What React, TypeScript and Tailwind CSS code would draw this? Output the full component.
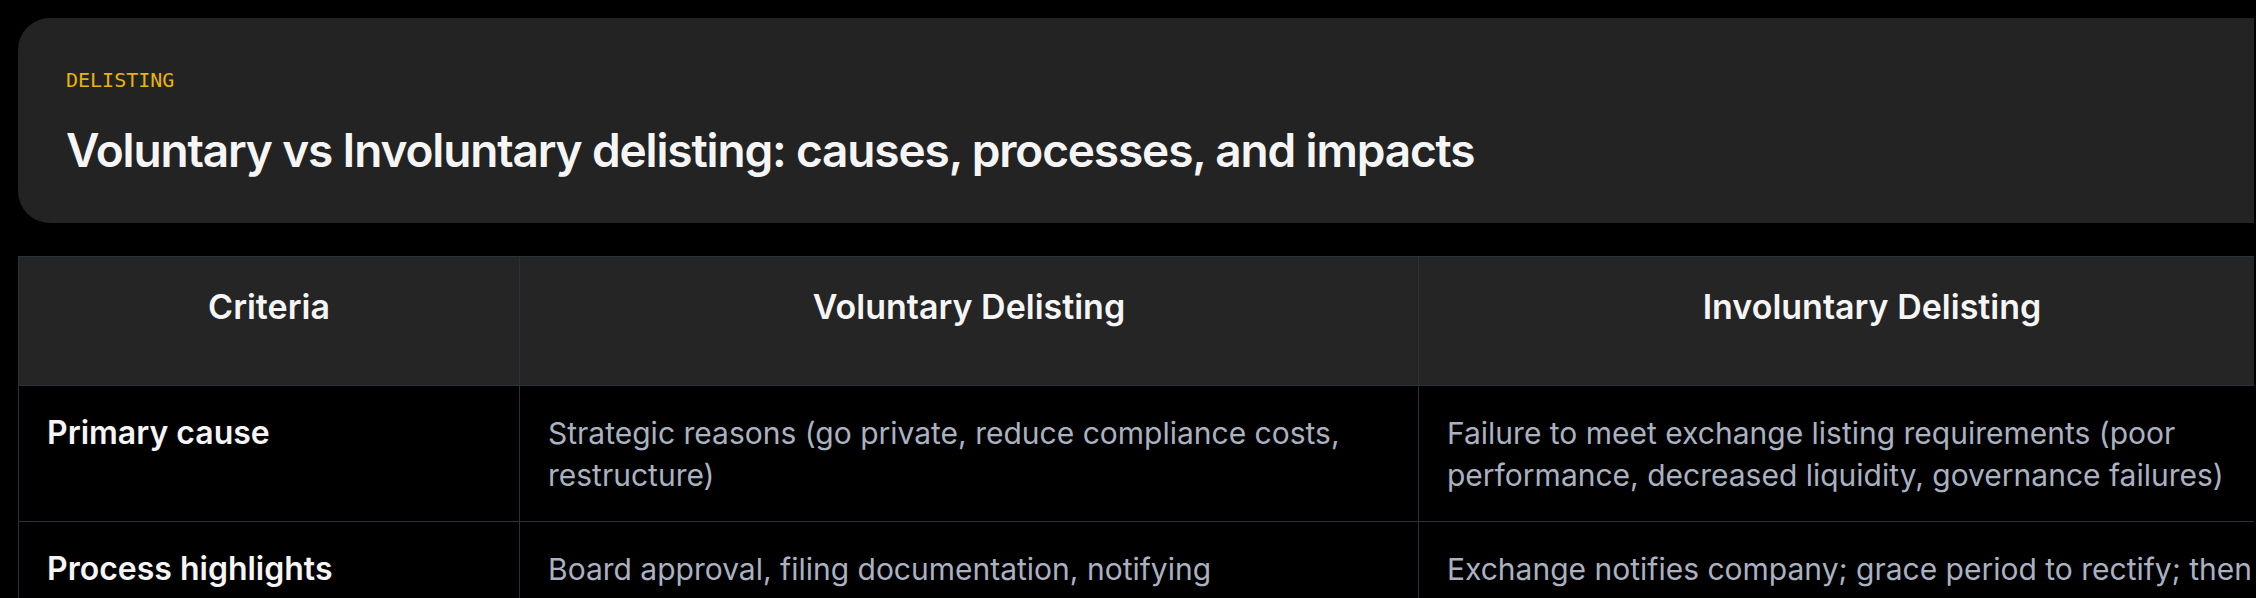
import React from 'react'

const rows = [
  {
    label: 'Primary cause',
    voluntary: 'Strategic reasons (go private, reduce compliance costs, restructure)',
    involuntary:
      'Failure to meet exchange listing requirements (poor performance, decreased liquidity, governance failures)',
  },
  {
    label: 'Process highlights',
    voluntary: 'Board approval, filing documentation, notifying shareholders and regulators',
    involuntary:
      'Exchange notifies company; grace period to rectify; then suspension and removal from the exchange',
  },
]

export default function App() {
  return (
    <div className="min-h-screen bg-black overflow-hidden font-['Inter',sans-serif]">
      <div className="ml-[18px] w-[2236px] overflow-hidden pt-[18px]">
        {/* Title card */}
        <section className="w-[2400px] rounded-[32px] bg-[#232323] px-[48px] pt-[48px] pb-[45px]">
          <p className="font-['DejaVu_Sans_Mono',monospace] text-[20px] leading-[28px] text-[#eab308]">
            DELISTING
          </p>
          <h1 className="mt-[29px] text-[46px] leading-[1.2] font-semibold tracking-tight text-[#f5f5f5]">
            Voluntary vs Involuntary delisting: causes, processes, and impacts
          </h1>
        </section>

        {/* Comparison table */}
        <div className="mt-[33px] w-[2308px] border border-[#2b3138]">
          <div className="grid grid-cols-[500px_899px_907px] bg-[#252525] border-b border-[#2b3138]">
            {['Criteria', 'Voluntary Delisting', 'Involuntary Delisting'].map((h, i) => (
              <div
                key={h}
                className={
                  'h-[128px] px-[28px] pt-[26px] text-center text-[34px] leading-[48px] font-semibold text-[#f5f5f5]' +
                  (i > 0 ? ' border-l border-[#2b3138]' : '')
                }
              >
                {h}
              </div>
            ))}
          </div>
          {rows.map((r) => (
            <div
              key={r.label}
              className="grid grid-cols-[500px_899px_907px] border-b border-[#2b3138] bg-black"
            >
              <div className="px-[28px] pt-[26px] pb-[25px] text-[32px] leading-[42px] font-semibold text-[#f5f5f5]">
                {r.label}
              </div>
              <div className="border-l border-[#2b3138] px-[28px] pt-[26px] pb-[25px] text-[30px] leading-[42px] text-[#aab2c0]">
                {r.voluntary}
              </div>
              <div className="border-l border-[#2b3138] px-[28px] pt-[26px] pb-[25px] text-[30px] leading-[42px] text-[#aab2c0]">
                {r.involuntary}
              </div>
            </div>
          ))}
        </div>
      </div>
    </div>
  )
}
